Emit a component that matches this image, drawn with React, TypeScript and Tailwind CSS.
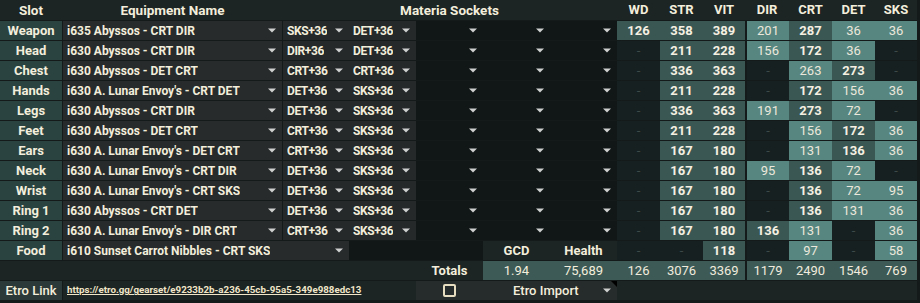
import React from "react";

type Kind = "d" | "m" | "l" | "t";
type Stat = [string, Kind];

interface GearRow {
  slot: string;
  name: string;
  m1: string;
  m2: string;
  stats: Stat[];
}

const GEAR: GearRow[] = [
  { slot: "Weapon", name: "i635 Abyssos - CRT DIR", m1: "SKS+36", m2: "DET+36", stats: [["126", "m"], ["358", "m"], ["389", "m"], ["201", "l"], ["287", "m"], ["36", "l"], ["36", "l"]] },
  { slot: "Head", name: "i630 Abyssos - CRT DIR", m1: "DIR+36", m2: "DET+36", stats: [["-", "d"], ["211", "m"], ["228", "m"], ["156", "l"], ["172", "m"], ["36", "l"], ["-", "d"]] },
  { slot: "Chest", name: "i630 Abyssos - DET CRT", m1: "CRT+36", m2: "CRT+36", stats: [["-", "d"], ["336", "m"], ["363", "m"], ["-", "d"], ["263", "l"], ["273", "m"], ["-", "d"]] },
  { slot: "Hands", name: "i630 A. Lunar Envoy's - CRT DET", m1: "DET+36", m2: "SKS+36", stats: [["-", "d"], ["211", "m"], ["228", "m"], ["-", "d"], ["172", "m"], ["156", "l"], ["36", "l"]] },
  { slot: "Legs", name: "i630 Abyssos - CRT DIR", m1: "DET+36", m2: "SKS+36", stats: [["-", "d"], ["336", "m"], ["363", "m"], ["191", "l"], ["273", "m"], ["72", "l"], ["-", "d"]] },
  { slot: "Feet", name: "i630 Abyssos - DET CRT", m1: "CRT+36", m2: "SKS+36", stats: [["-", "d"], ["211", "m"], ["228", "m"], ["-", "d"], ["156", "l"], ["172", "m"], ["36", "l"]] },
  { slot: "Ears", name: "i630 A. Lunar Envoy's - DET CRT", m1: "CRT+36", m2: "SKS+36", stats: [["-", "d"], ["167", "m"], ["180", "m"], ["-", "d"], ["131", "l"], ["136", "m"], ["36", "l"]] },
  { slot: "Neck", name: "i630 A. Lunar Envoy's - CRT DIR", m1: "DET+36", m2: "SKS+36", stats: [["-", "d"], ["167", "m"], ["180", "m"], ["95", "l"], ["136", "m"], ["72", "l"], ["-", "d"]] },
  { slot: "Wrist", name: "i630 A. Lunar Envoy's - CRT SKS", m1: "DET+36", m2: "SKS+36", stats: [["-", "d"], ["167", "m"], ["180", "m"], ["-", "d"], ["136", "m"], ["72", "l"], ["95", "l"]] },
  { slot: "Ring 1", name: "i630 Abyssos - CRT DET", m1: "DET+36", m2: "SKS+36", stats: [["-", "d"], ["167", "m"], ["180", "m"], ["-", "d"], ["136", "m"], ["131", "l"], ["36", "l"]] },
  { slot: "Ring 2", name: "i630 A. Lunar Envoy's - DIR CRT", m1: "CRT+36", m2: "SKS+36", stats: [["-", "d"], ["167", "m"], ["180", "m"], ["136", "m"], ["131", "l"], ["-", "d"], ["36", "l"]] },
];

const FOOD_STATS: Stat[] = [["-", "d"], ["-", "d"], ["118", "m"], ["-", "d"], ["97", "l"], ["-", "d"], ["58", "l"]];
const TOTALS: Stat[] = [["126", "t"], ["3076", "t"], ["3369", "t"], ["1179", "t"], ["2490", "t"], ["1546", "t"], ["769", "t"]];
const STAT_NAMES = ["WD", "STR", "VIT", "DIR", "CRT", "DET", "SKS"];

const Arrow = () => (
  <svg width="8" height="5" viewBox="0 0 8 5" className="shrink-0">
    <path d="M0 0.5h8L4 4.5z" fill="#cfd0d0" />
  </svg>
);

function Dropdown({ text, className = "" }: { text?: string; className?: string }) {
  return (
    <div className={`flex items-center justify-between pl-1 pr-[6px] ${className}`}>
      <span className="truncate">{text}</span>
      <Arrow />
    </div>
  );
}

function StatCell({ stat, index }: { stat: Stat; index: number }) {
  const [value, kind] = stat;
  const bg =
    kind === "d"
      ? "bg-[#172020] text-[#3d4a49] font-normal"
      : kind === "m"
      ? "bg-[#3b5754] text-[#f5f0e2] font-bold"
      : kind === "l"
      ? "bg-[#578680] text-[#ece8dc] font-normal"
      : "bg-[#3d5a57] text-[#f0ebdc] font-normal";
  return (
    <div
      className={`flex items-center justify-center ${bg} ${
        index === 3 ? "border-l-2 border-[#131a19]" : ""
      }`}
    >
      {value}
    </div>
  );
}

export default function App() {
  return (
    <div
      className="w-[920px] h-[303px] bg-[#131a19] text-[13px] text-[#f3eedc] overflow-hidden"
      style={{ fontFamily: 'Roboto, "Open Sans", sans-serif' }}
    >
      <div className="grid grid-cols-[62px_220px_67px_67px_67px_67px_67px_43px_43px_42px_44px_43px_43px_42px] grid-rows-[20px_repeat(14,19px)] gap-y-px pr-[3px] pb-[3px] bg-[#131a19]">
        {/* header */}
        <div className="flex items-center justify-center bg-[#1c2424] font-bold text-[13.5px]">Slot</div>
        <div className="flex items-center justify-center bg-[#1c2424] font-bold text-[13.5px] border-l border-[#1c2424]">
          Equipment Name
        </div>
        <div className="col-span-5 flex items-center justify-center bg-[#1c2424] font-bold text-[13.5px]">
          Materia Sockets
        </div>
        {STAT_NAMES.map((s) => (
          <div key={s} className="flex items-center justify-center bg-[#1c2424] font-bold text-[13px]">
            {s}
          </div>
        ))}

        {/* gear rows */}
        {GEAR.map((row) => (
          <React.Fragment key={row.slot}>
            <div className="flex items-center justify-center bg-[#2a4341] font-bold">{row.slot}</div>
            <Dropdown text={row.name} className="bg-[#272b2c] font-bold text-[12px] border-l border-[#131a19]" />
            <Dropdown
              text={row.m1}
              className="bg-[#25292a] font-bold text-[12px] tracking-[-0.4px] border-l border-[#131a19]"
            />
            <Dropdown text={row.m2} className="bg-[#25292a] font-bold text-[12px] tracking-[-0.4px]" />
            <Dropdown className="bg-[#111716]" />
            <Dropdown className="bg-[#111716]" />
            <Dropdown className="bg-[#111716]" />
            {row.stats.map((s, i) => (
              <StatCell key={i} stat={s} index={i} />
            ))}
          </React.Fragment>
        ))}

        {/* food */}
        <div className="flex items-center justify-center bg-[#2a4341] font-bold">Food</div>
        <Dropdown
          text="i610 Sunset Carrot Nibbles - CRT SKS"
          className="col-span-2 bg-[#272b2c] font-bold text-[12px] border-l border-[#131a19]"
        />
        <div className="col-span-2 bg-[#111716]" />
        <div className="flex items-center justify-center bg-[#1c2424] font-bold">GCD</div>
        <div className="flex items-center justify-center bg-[#1c2424] font-bold">Health</div>
        {FOOD_STATS.map((s, i) => (
          <StatCell key={i} stat={s} index={i} />
        ))}

        {/* totals */}
        <div className="col-span-4 bg-[#1c2424]" />
        <div className="flex items-center justify-center bg-[#1c2424] font-bold">Totals</div>
        <div className="flex items-center justify-center bg-[#3d5a57] font-normal">1.94</div>
        <div className="flex items-center justify-center bg-[#3d5a57] font-normal">75,689</div>
        {TOTALS.map((s, i) => (
          <StatCell key={i} stat={s} index={i} />
        ))}

        {/* etro */}
        <div className="flex items-center justify-center bg-[#2b3a39] font-medium">Etro Link</div>
        <div className="col-span-3 flex items-center pl-1 bg-[#1c2424] border-l border-[#131a19]">
          <a href="#" className="text-[9.75px] font-bold underline text-[#f1e6c8]">
            https://etro.gg/gearset/e9233b2b-a236-45cb-95a5-349e988edc13
          </a>
        </div>
        <div className="flex items-center justify-center bg-[#262b2b]">
          <span className="block w-[13px] h-[13px] rounded-[2px] border-2 border-[#e6dcc0]" />
        </div>
        <div className="relative col-span-2 bg-[#262b2b]">
          <div className="flex h-full items-center justify-between pl-[30px] pr-[6px] font-medium">
            <span>Etro Import</span>
            <Arrow />
          </div>
          <span className="absolute top-0 right-0 w-0 h-0 border-l-[6px] border-b-[6px] border-l-transparent border-b-transparent border-t-0 border-r-[6px] border-r-black border-t-black" />
        </div>
        <div className="col-span-7 bg-[#1c2424]" />
      </div>
    </div>
  );
}
